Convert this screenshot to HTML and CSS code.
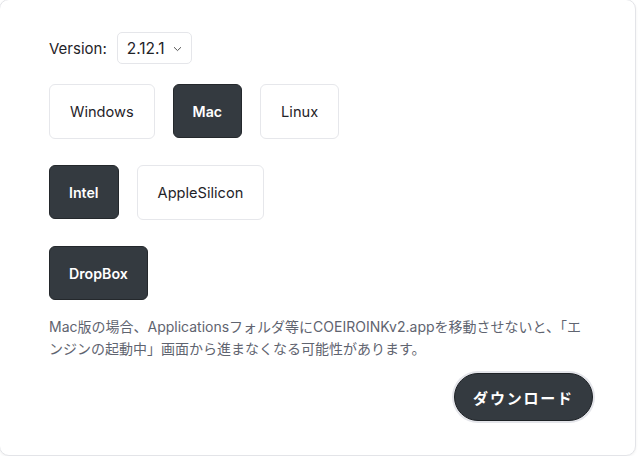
FILE: index.html
```html
<!DOCTYPE html>
<html lang="ja">
<head>
    <meta charset="UTF-8">
    <meta name="viewport" content="width=device-width, initial-scale=1.0">
    <title>Download</title>
    <link rel="stylesheet" href="styles.css">
</head>
<body>
    <div class="card">
        <div class="version-row">
            <label for="version">Version:</label>
            <div class="select-box">
                <span>2.12.1</span>
                <svg width="9" height="6" viewBox="0 0 9 6"><path d="M1 1.2 L4.5 4.6 L8 1.2" fill="none" stroke="#555" stroke-width="1"/></svg>
            </div>
        </div>

        <div class="btn-row">
            <button class="choice">Windows</button>
            <button class="choice active">Mac</button>
            <button class="choice">Linux</button>
        </div>

        <div class="btn-row">
            <button class="choice active">Intel</button>
            <button class="choice">AppleSilicon</button>
        </div>

        <div class="btn-row">
            <button class="choice active">DropBox</button>
        </div>

        <p class="note">Mac版の場合、Applicationsフォルダ等にCOEIROINKv2.appを移動させないと、「エンジンの起動中」画面から進まなくなる可能性があります。</p>

        <div class="actions">
            <button class="download">ダウンロード</button>
        </div>
    </div>
</body>
</html>
```

FILE: styles.css
```css
body {
    margin: 0;
    padding: 0;
    background-color: #ffffff;
    font-family: Inter, "Noto Sans CJK JP", sans-serif;
    color: #1f2328;
}

.card {
    width: 637px;
    height: 457px;
    box-sizing: border-box;
    margin: -1px 0 0 -1px;
    padding: 32px 42px 0 49px;
    background-color: white;
    border: 1px solid #e3e4e8;
    border-radius: 10px;
    box-shadow: 0px 1px 3px rgba(0, 0, 0, 0.06);
}

.version-row {
    display: flex;
    align-items: center;
    gap: 10px;
    font-size: 15px;
}

.select-box {
    display: flex;
    align-items: center;
    gap: 8px;
    height: 30px;
    padding: 0 9px 0 9px;
    border: 1px solid #e5e6ea;
    border-radius: 5px;
    font-size: 15.5px;
}

.select-box svg {
    margin-top: 1px;
}

.btn-row {
    display: flex;
    gap: 18px;
    margin-top: 20px;
}

.btn-row + .btn-row {
    margin-top: 26px;
}

.choice {
    height: 55px;
    padding: 0 20px;
    font-family: Inter, sans-serif;
    font-size: 14.6px;
    font-weight: 400;
    color: #1f2328;
    background-color: white;
    border: 1px solid #e6e7eb;
    border-radius: 6px;
}

.choice.active {
    height: 54px;
    padding: 0 19px;
    background-color: #343a40;
    border-color: #24282c;
    color: white;
    font-size: 14.2px;
    font-weight: 600;
}

.note {
    margin: 16px 0 0;
    font-size: 14px;
    line-height: 22px;
    color: #5f6470;
}

.actions {
    display: flex;
    justify-content: flex-end;
    margin-top: 13px;
}

.download {
    width: 139px;
    height: 48px;
    font-family: "Noto Sans CJK JP", sans-serif;
    font-size: 15px;
    font-weight: 700;
    letter-spacing: 1.8px;
    color: white;
    background-color: #343a40;
    border: 1px solid #1e2226;
    border-radius: 25px;
    box-shadow: 0 0 0 2px #e4e5ea;
}
```
